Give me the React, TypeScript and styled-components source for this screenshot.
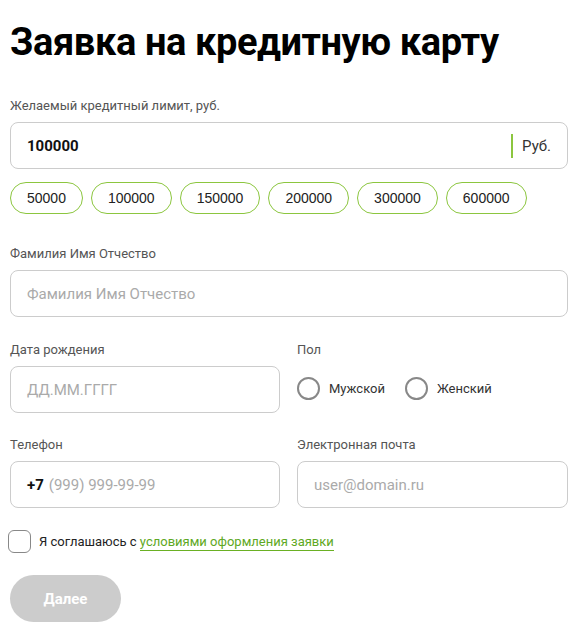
import React from "react";
import styled, { createGlobalStyle } from "styled-components";

const GlobalStyle = createGlobalStyle`
  body {
    margin: 0;
    background: #fff;
    font-family: Roboto, "Noto Sans", sans-serif;
    color: #222;
  }
`;

const Page = styled.div`
  padding: 20px 9px 16px 10px;
  display: flex;
  flex-direction: column;
`;

const Title = styled.h1`
  margin: 0 0 34px;
  font-size: 38px;
  line-height: 44px;
  font-weight: 700;
  color: #000;
  letter-spacing: -0.4px;
`;

const Field = styled.div<{ gap?: number }>`
  display: flex;
  flex-direction: column;
  margin-bottom: ${(p) => p.gap ?? 0}px;
`;

const Label = styled.label`
  font-size: 13px;
  line-height: 16px;
  color: #555;
  margin-bottom: 8px;
`;

const InputBox = styled.div`
  height: 47px;
  box-sizing: border-box;
  border: 1px solid #ccc;
  border-radius: 8px;
  display: flex;
  align-items: center;
  padding: 0 16px;
  font-size: 15px;
  color: #aaa;
`;

const Value = styled.span`
  font-weight: 700;
  color: #111;
  flex: 1;
`;

const Unit = styled.span`
  border-left: 2px solid #8cc63f;
  padding-left: 9px;
  line-height: 24px;
  color: #333;
`;

const Chips = styled.div`
  display: flex;
  gap: 8px;
  margin-top: 13px;
`;

const Chip = styled.button`
  height: 32px;
  padding: 0 16px;
  border: 1px solid #8cc63f;
  border-radius: 16px;
  background: #fff;
  font-family: "Liberation Sans", Arial, sans-serif;
  font-size: 14px;
  color: #222;
`;

const Row = styled.div`
  display: grid;
  grid-template-columns: 270px 1fr;
  column-gap: 17px;
  margin-bottom: 24px;
`;

const Prefix = styled.span`
  color: #111;
  font-weight: 700;
  margin-right: 5px;
`;

const Radios = styled.div`
  display: flex;
  align-items: center;
  height: 45px;
  gap: 20px;
`;

const RadioItem = styled.label`
  display: flex;
  align-items: center;
  gap: 9px;
  font-size: 13px;
  color: #333;
`;

const Circle = styled.span`
  width: 23px;
  height: 23px;
  box-sizing: border-box;
  border: 2px solid #888;
  border-radius: 50%;
`;

const Agree = styled.div`
  display: flex;
  align-items: center;
  gap: 8px;
  margin: -2px 0 22px -2px;
  font-size: 13px;
  color: #222;
`;

const Box = styled.span`
  width: 23px;
  height: 23px;
  box-sizing: border-box;
  border: 1px solid #888;
  border-radius: 6px;
`;

const Link = styled.a`
  color: #5ea823;
  border-bottom: 1px solid #6ab023;
  text-decoration: none;
  padding-bottom: 1px;
`;

const Submit = styled.button`
  width: 111px;
  height: 47px;
  border: none;
  border-radius: 24px;
  background: #ccc;
  color: #fff;
  font-family: Roboto, sans-serif;
  font-weight: 700;
  font-size: 15px;
`;

const amounts = ["50000", "100000", "150000", "200000", "300000", "600000"];

export default function App() {
  return (
    <>
      <GlobalStyle />
      <Page>
        <Title>Заявка на кредитную карту</Title>
        <Field gap={32}>
          <Label>Желаемый кредитный лимит, руб.</Label>
          <InputBox>
            <Value>100000</Value>
            <Unit>Руб.</Unit>
          </InputBox>
          <Chips>
            {amounts.map((a) => (
              <Chip key={a}>{a}</Chip>
            ))}
          </Chips>
        </Field>
        <Field gap={25}>
          <Label>Фамилия Имя Отчество</Label>
          <InputBox>Фамилия Имя Отчество</InputBox>
        </Field>
        <Row>
          <Field>
            <Label>Дата рождения</Label>
            <InputBox>ДД.ММ.ГГГГ</InputBox>
          </Field>
          <Field>
            <Label>Пол</Label>
            <Radios>
              <RadioItem>
                <Circle />
                Мужской
              </RadioItem>
              <RadioItem>
                <Circle />
                Женский
              </RadioItem>
            </Radios>
          </Field>
        </Row>
        <Row>
          <Field>
            <Label>Телефон</Label>
            <InputBox>
              <Prefix>+7</Prefix>(999) 999-99-99
            </InputBox>
          </Field>
          <Field>
            <Label>Электронная почта</Label>
            <InputBox>user@domain.ru</InputBox>
          </Field>
        </Row>
        <Agree>
          <Box />
          <span>
            Я соглашаюсь с <Link>условиями оформления заявки</Link>
          </span>
        </Agree>
        <div>
          <Submit>Далее</Submit>
        </div>
      </Page>
    </>
  );
}
